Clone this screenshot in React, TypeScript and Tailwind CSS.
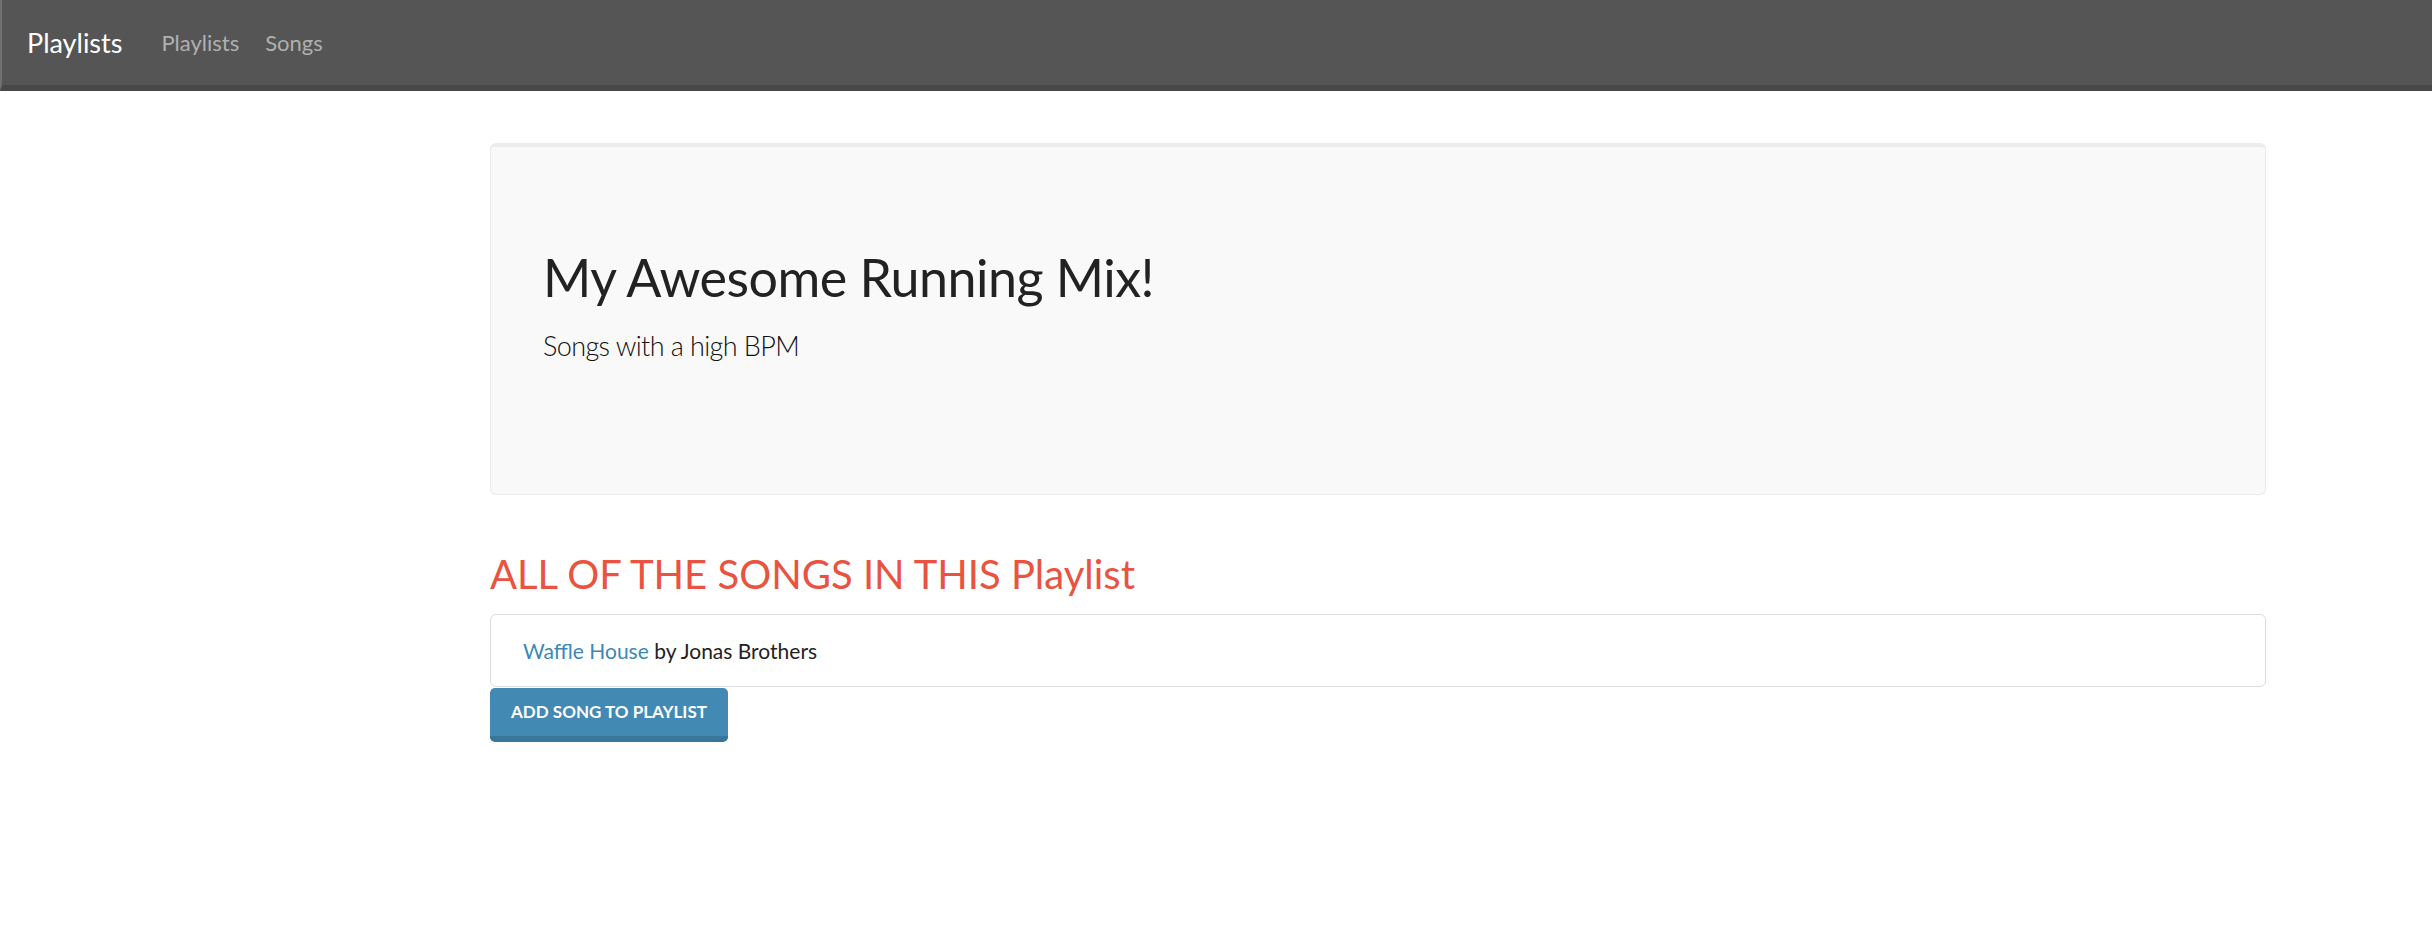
import React from 'react';

const songs = [{ title: 'Waffle House', artist: 'Jonas Brothers' }];

function App() {
  return (
    <div className="min-h-[930px] bg-white font-['Lato',_'Liberation_Sans',_sans-serif] text-[#222]">
      {/* Navbar */}
      <nav className="h-[91px] bg-[#555555] border-b-[6px] border-b-[#484848] border-l-2 border-l-[#707070] flex items-center">
        <a className="ml-[25px] text-[27px] leading-[30px] text-white">Playlists</a>
        <div className="flex ml-[39px] gap-[26px]">
          <a className="text-[22px] leading-[30px] text-[#b0b0b0]">Playlists</a>
          <a className="text-[22px] leading-[30px] text-[#b0b0b0]">Songs</a>
        </div>
      </nav>

      <div className="ml-[490px] w-[1776px]">
        {/* Jumbotron */}
        <div className="mt-[52px] bg-[#f9f9f9] border border-[#e9e9e9] border-t-4 border-t-[#ececec] rounded-[6px] pl-[52px] pt-[100px] pb-[130px]">
          <h1 className="text-[52px] leading-[60px] tracking-[-0.5px] text-[#222]">My Awesome Running Mix!</h1>
          <p className="mt-[21px] text-[27px] leading-[36px] tracking-[-0.6px] font-light text-[#111]">Songs with a high BPM</p>
        </div>

        <h2 className="mt-[55px] text-[40px] leading-[48px] text-[#e9533f]">ALL OF THE SONGS IN THIS Playlist</h2>

        {/* Songs list */}
        <ul className="mt-[16px] border border-[#dddddd] rounded-[6px] bg-white">
          {songs.map(s => (
            <li key={s.title} className="px-[32px] py-[20px] text-[21px] leading-[31px]">
              <a className="text-[#3b88b6]">{s.title}</a> by {s.artist}
            </li>
          ))}
        </ul>

        <button className="mt-px w-[238px] h-[54px] bg-[#4289b4] border-b-[6px] border-b-[#38769c] rounded-[5px] flex items-center justify-center text-white font-bold text-[17px] leading-[20px]">
          ADD SONG TO PLAYLIST
        </button>
      </div>
    </div>
  );
}

export default App;
